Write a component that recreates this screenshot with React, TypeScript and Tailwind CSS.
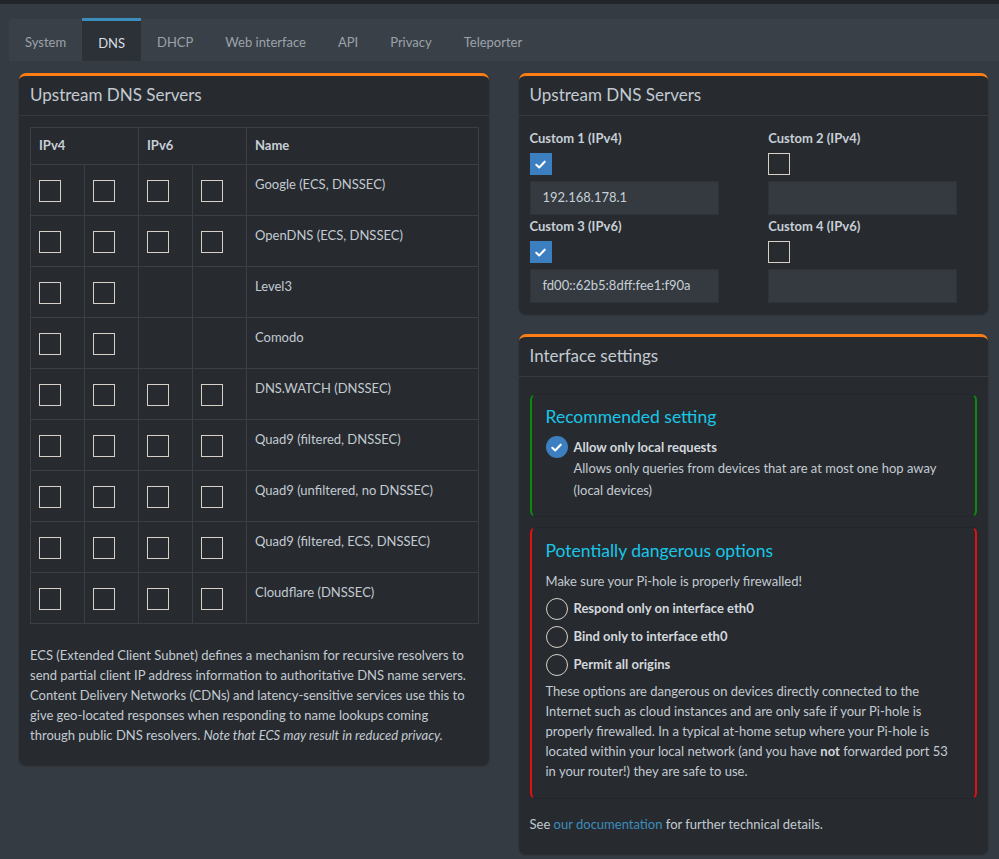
import React from "react";

const font = { fontFamily: '"Source Sans Pro", Lato, "Noto Sans", sans-serif' };

const Check = ({ className = "" }: { className?: string }) => (
  <svg viewBox="0 0 16 16" className={className} fill="none">
    <path
      d="M3.5 8.3 6.6 11.2 12.5 5"
      stroke="white"
      strokeWidth="2.2"
      strokeLinecap="round"
      strokeLinejoin="round"
    />
  </svg>
);

const Box = ({ checked }: { checked?: boolean }) =>
  checked ? (
    <div className="w-[22px] h-[22px] bg-[#3c7fc0] flex items-center justify-center">
      <Check className="w-[15px] h-[15px]" />
    </div>
  ) : (
    <div className="w-[22px] h-[22px] border border-[#d6d0c6]" />
  );

const Radio = ({ checked }: { checked?: boolean }) =>
  checked ? (
    <div className="w-[22px] h-[22px] rounded-full bg-[#3c7fc0] flex items-center justify-center shrink-0">
      <Check className="w-[15px] h-[15px]" />
    </div>
  ) : (
    <div className="w-[22px] h-[22px] rounded-full border border-[#d6d0c6] shrink-0" />
  );

const Card = ({
  title,
  children,
}: {
  title: string;
  children: React.ReactNode;
}) => (
  <div className="bg-[#272b30] rounded-[7px] border-t-[3px] border-[#fd7e14] shadow-[0_1px_2px_rgba(0,0,0,0.3)]">
    <div className="h-[40px] px-[11px] pb-[2px] flex items-center border-b border-[#363b41]">
      <h3 className="text-[17px] text-[#c3cad1] leading-none">{title}</h3>
    </div>
    {children}
  </div>
);

const SERVERS: { name: string; v6: boolean }[] = [
  { name: "Google (ECS, DNSSEC)", v6: true },
  { name: "OpenDNS (ECS, DNSSEC)", v6: true },
  { name: "Level3", v6: false },
  { name: "Comodo", v6: false },
  { name: "DNS.WATCH (DNSSEC)", v6: true },
  { name: "Quad9 (filtered, DNSSEC)", v6: true },
  { name: "Quad9 (unfiltered, no DNSSEC)", v6: true },
  { name: "Quad9 (filtered, ECS, DNSSEC)", v6: true },
  { name: "Cloudflare (DNSSEC)", v6: true },
];

const TABS = ["System", "DNS", "DHCP", "Web interface", "API", "Privacy", "Teleporter"];

const CUSTOM = [
  { label: "Custom 1 (IPv4)", checked: true, value: "192.168.178.1" },
  { label: "Custom 2 (IPv4)", checked: false, value: "" },
  { label: "Custom 3 (IPv6)", checked: true, value: "fd00::62b5:8dff:fee1:f90a" },
  { label: "Custom 4 (IPv6)", checked: false, value: "" },
];

export default function App() {
  const cell = "border border-[#3a3f45] align-top";
  return (
    <div
      style={font}
      className="min-h-[859px] bg-[#353b42] text-[13px] text-[#c3cad1] border-t-4 border-[#22262a]"
    >
      <div className="pt-[15px] pl-[9px]">
        {/* Tabs */}
        <div className="flex h-[42px] bg-[#3a4047] rounded-tl-[3px]">
          {TABS.map((t) => {
            const active = t === "DNS";
            return (
              <div
                key={t}
                className={`px-[16px] flex items-center pt-[6px] ${
                  active
                    ? "bg-[#2c3137] border-t-[3px] border-[#3c8dbc] text-[#d8dde2] -mt-[1px] h-[43px] px-[15px]"
                    : "text-[#9aa3ab]"
                }`}
              >
                {t}
              </div>
            );
          })}
        </div>

        {/* Content */}
        <div className="grid grid-cols-2 gap-[30px] pl-[10px] pr-[11px] pt-[12px]">
          {/* Left column */}
          <div>
            <Card title="Upstream DNS Servers">
              <div className="pt-[11px] pb-[10px] pl-[11px] pr-[10px]">
                <table className="w-full border-collapse">
                  <thead>
                    <tr className="h-[37px] text-left font-bold text-[#c8cfd6]">
                      <th colSpan={2} className={`${cell} !align-middle px-[8px]`}>
                        IPv4
                      </th>
                      <th colSpan={2} className={`${cell} !align-middle px-[8px]`}>
                        IPv6
                      </th>
                      <th className={`${cell} !align-middle px-[8px]`}>Name</th>
                    </tr>
                  </thead>
                  <tbody>
                    {SERVERS.map((s) => (
                      <tr key={s.name} className="h-[51px]">
                        <td className={`${cell} w-[54px] pl-[8px] pt-[15px]`}>
                          <Box />
                        </td>
                        <td className={`${cell} w-[54px] pl-[8px] pt-[15px]`}>
                          <Box />
                        </td>
                        <td className={`${cell} w-[54px] pl-[8px] pt-[15px]`}>
                          {s.v6 && <Box />}
                        </td>
                        <td className={`${cell} w-[54px] pl-[8px] pt-[15px]`}>
                          {s.v6 && <Box />}
                        </td>
                        <td className={`${cell} px-[8px] pt-[9px] leading-[20px]`}>
                          {s.name}
                        </td>
                      </tr>
                    ))}
                  </tbody>
                </table>
                <p className="mt-[21px] mb-[10px] leading-[20px] pr-[8px]">
                  ECS (Extended Client Subnet) defines a mechanism for recursive
                  resolvers to send partial client IP address information to
                  authoritative DNS name servers. Content Delivery Networks (CDNs)
                  and latency-sensitive services use this to give geo-located
                  responses when responding to name lookups coming through public
                  DNS resolvers. <i>Note that ECS may result in reduced privacy.</i>
                </p>
              </div>
            </Card>
          </div>

          {/* Right column */}
          <div className="flex flex-col gap-[20px]">
            <Card title="Upstream DNS Servers">
              <div className="grid grid-cols-2 gap-x-[30px] px-[11px] pt-[12px] pb-[10px]">
                {CUSTOM.map((c) => (
                  <div key={c.label} className="mb-[1px]">
                    <div className="font-bold text-[#c8cfd6] leading-[20px]">{c.label}</div>
                    <div className="mt-[5px] mb-[6px]">
                      <Box checked={c.checked} />
                    </div>
                    <div className="h-[34px] w-[189px] bg-[#343a40] border border-[#2e3338] flex items-center px-[12px] text-[#c8cfd6]">
                      {c.value}
                    </div>
                  </div>
                ))}
              </div>
            </Card>

            <Card title="Interface settings">
              <div className="px-[11px] pt-[17px] pb-[20px]">
                <div className="rounded-[6px] border-x-2 border-x-[#0b8a0b] border-y border-y-[#23272b] px-[14px] pt-[10px] pb-[15px]">
                  <h4 className="text-[17.5px] text-[#19c6e6] leading-[24px]">
                    Recommended setting
                  </h4>
                  <div className="flex gap-[6px] mt-[7px]">
                    <Radio checked />
                    <div className="pt-[1px]">
                      <div className="font-bold text-[#d3d8dd] leading-[20px]">
                        Allow only local requests
                      </div>
                      <div className="leading-[22px]">
                        Allows only queries from devices that are at most one hop away
                        <br />
                        (local devices)
                      </div>
                    </div>
                  </div>
                </div>

                <div className="mt-[10px] rounded-[6px] border-x-2 border-x-[#e41010] border-y border-y-[#23272b] px-[14px] pt-[11px] pb-[17px]">
                  <h4 className="text-[17.5px] text-[#19c6e6] leading-[24px]">
                    Potentially dangerous options
                  </h4>
                  <p className="mt-[8px] leading-[20px]">
                    Make sure your Pi-hole is properly firewalled!
                  </p>
                  <div className="mt-[7px] flex flex-col gap-[6px]">
                    {[
                      "Respond only on interface eth0",
                      "Bind only to interface eth0",
                      "Permit all origins",
                    ].map((r) => (
                      <div key={r} className="flex items-center gap-[6px]">
                        <Radio />
                        <span className="font-bold text-[#d3d8dd]">{r}</span>
                      </div>
                    ))}
                  </div>
                  <p className="mt-[5px] leading-[20px]">
                    These options are dangerous on devices directly connected to the
                    Internet such as cloud instances and are only safe if your Pi-hole
                    is properly firewalled. In a typical at-home setup where your
                    Pi-hole is located within your local network (and you have{" "}
                    <b className="text-[#d3d8dd]">not</b> forwarded port 53 in your
                    router!) they are safe to use.
                  </p>
                </div>

                <p className="mt-[15px] leading-[20px]">
                  See <span className="text-[#3c8dbc]">our documentation</span> for
                  further technical details.
                </p>
              </div>
            </Card>
          </div>
        </div>
      </div>
    </div>
  );
}
